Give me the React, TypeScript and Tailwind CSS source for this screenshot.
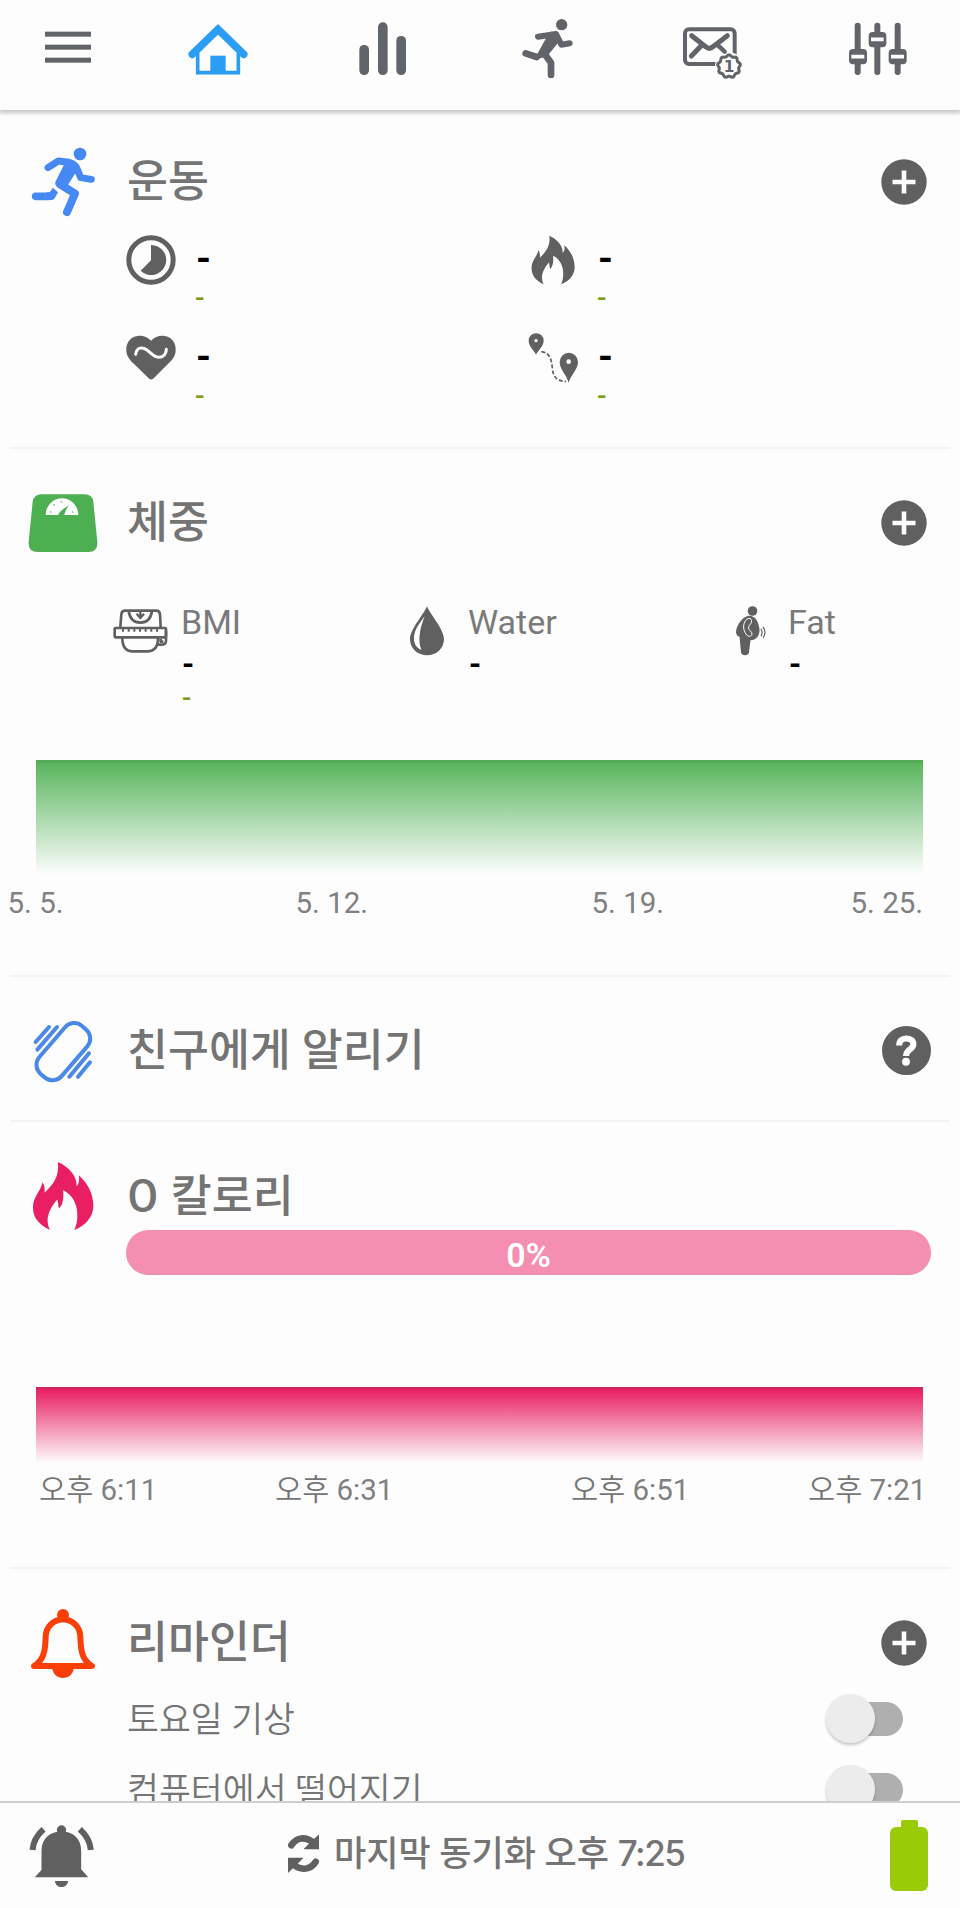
import { ReactNode } from "react";

interface IconProps {
  className?: string;
}

interface MetricProps {
  icon: ReactNode;
}

interface SectionHeaderProps {
  icon: ReactNode;
  title: ReactNode;
  action?: ReactNode;
}

interface ReminderProps {
  label: string;
}

const GRAY = "#606060";
const NAV = "#616468";

/* ---------- navigation icons ---------- */

function MenuIcon() {
  return (
    <svg viewBox="114 54 180 180" className="size-15" fill={NAV}>
      <rect x="135" y="95" width="138" height="15" />
      <rect x="135" y="134" width="138" height="15" />
      <rect x="135" y="173" width="138" height="15" />
    </svg>
  );
}

function HomeIcon() {
  return (
    <svg viewBox="565 54 180 180" className="size-15" fill="none" stroke="#2a9df4">
      <path d="M594 158V218H716V158" strokeWidth="11" />
      <path d="M578 163L655 88L732 163" strokeWidth="23" strokeLinecap="round" strokeLinejoin="miter" />
      <rect x="632" y="167" width="46" height="55" fill="#2a9df4" stroke="none" />
    </svg>
  );
}

function BarsIcon() {
  return (
    <svg viewBox="1059 54 180 180" className="size-15" fill={NAV}>
      <rect x="1078" y="135" width="29" height="90" rx="14" />
      <rect x="1134" y="67" width="29" height="158" rx="14" />
      <rect x="1189" y="108" width="29" height="117" rx="14" />
    </svg>
  );
}

function NavRunnerIcon() {
  return (
    <svg viewBox="114 54 180 180" className="size-15" fill="none" stroke={NAV} strokeLinecap="round" strokeLinejoin="round">
      <circle cx="245" cy="74" r="17" fill={NAV} stroke="none" />
      <path d="M174 110L228 102L244 134L269 130" strokeWidth="18" />
      <path d="M212 100L232 103L236 118L198 165L172 172Z" fill={NAV} strokeWidth="10" />
      <path d="M137 160L170 171" strokeWidth="20" />
      <path d="M194 162L213 188V225" strokeWidth="20" />
    </svg>
  );
}

// wavy outline of the mail badge
const BADGE_PATH =
  Array.from({ length: 91 }, (_, i) => {
    const a = (i / 90) * Math.PI * 2;
    const r = 32 + 2.5 * Math.cos(9 * a);
    return `${i === 0 ? "M" : "L"}${(746 + r * Math.sin(a)).toFixed(1)} ${(199 - r * Math.cos(a)).toFixed(1)}`;
  }).join("") + "Z";

function MailIcon() {
  return (
    <svg viewBox="608 54 180 180" className="size-15 overflow-visible" fill="none" stroke={NAV} strokeLinecap="round" strokeLinejoin="round">
      <rect x="614" y="88" width="149" height="104" rx="12" strokeWidth="12" />
      <path d="M634 107L676 140Q687 150 698 140L741 107" strokeWidth="15" />
      <path d="M633 168L662 138" strokeWidth="15" />
      <circle cx="746" cy="199" r="42" fill="#fdfdfd" stroke="none" />
      <path d="M713 136L733 155" strokeWidth="13" />
      <path d={BADGE_PATH} strokeWidth="9" fill="#fdfdfd" />
      <text
        x="746"
        y="216"
        textAnchor="middle"
        fontSize="46"
        fontWeight="700"
        fill={NAV}
        stroke="none"
        fontFamily="'DejaVu Sans', sans-serif"
      >
        1
      </text>
    </svg>
  );
}

function SlidersIcon() {
  return (
    <svg viewBox="1104 54 180 180" className="size-15" fill={NAV}>
      <path d="M1133 77V216M1192 77V216M1253 77V216" stroke={NAV} strokeWidth="18" strokeLinecap="round" />
      <rect x="1107" y="147" width="54" height="46" rx="12" />
      <rect x="1166" y="96" width="53" height="46" rx="12" />
      <rect x="1226" y="147" width="54" height="46" rx="12" />
      <path d="M1114 170H1153M1173 118H1211M1233 170H1272" stroke="#fdfdfd" strokeWidth="11" />
    </svg>
  );
}

/* ---------- section icons ---------- */

function RunnerIcon() {
  return (
    <svg viewBox="81 438 216 216" className="size-18" fill="none" stroke="#4688f4" strokeLinecap="round" strokeLinejoin="round">
      <circle cx="240" cy="462" r="19" fill="#4688f4" stroke="none" />
      <path d="M144 503L175 483L207 487Q226 492 231 506L242 533L274 538" strokeWidth="21" />
      <path d="M202 492L224 508L196 552L174 548Z" fill="#4688f4" strokeWidth="16" />
      <path d="M179 552L225 581L201 636" strokeWidth="24" />
      <path d="M107 589H146" strokeWidth="23" />
      <path d="M140 577H148Q151 576 158 563L174 577L164 595Q161 600 155 600H140Z" fill="#4688f4" stroke="none" />
    </svg>
  );
}

function ScaleIcon() {
  return (
    <svg viewBox="81 80 216 216" className="size-18">
      <path
        d="M125 102H253Q278 102 280 125L292 245Q294 275 265 275H113Q84 275 86 245L98 125Q101 102 125 102Z"
        fill="#4caf50"
      />
      <path d="M137 164A49 50 0 0 1 235 164Z" fill="#fff" />
      <path d="M174 165Q177 152 208 135Q196 148 192 165Z" fill="#4caf50" />
      <g fill="#4caf50" opacity="0.6">
        <circle cx="152" cy="155" r="3" />
        <circle cx="162" cy="134" r="3" />
        <circle cx="184" cy="125" r="3" />
        <circle cx="218" cy="155" r="3" />
      </g>
    </svg>
  );
}

function VibrateIcon() {
  return (
    <svg viewBox="81 134 216 216" className="size-18" fill="none" stroke="#4a8ae6" strokeWidth="12" strokeLinecap="round">
      <rect x="146" y="149" width="88" height="190" rx="36" transform="rotate(40.8 190 244)" />
      <path d="M147 170L107 215M171 170L112 238M267 249L208 319M270 276L234 319" />
    </svg>
  );
}

function FlameIcon({ className }: IconProps) {
  return (
    <svg viewBox="83 572 211 211" className={className} fill="currentColor">
      <path d="M173 575C208 590 233 622 229 648C236 642 239 632 236 615C262 638 280 670 280 708C280 741 256 768 222 780C231 765 234 742 230 716C226 692 211 670 189 660C191 682 189 703 177 715C173 708 175 696 171 688C156 706 143 727 142 750C142 762 145 772 149 780C119 765 98 745 98 712C98 680 120 666 127 636C133 645 134 656 133 668C160 641 178 618 173 575Z" />
    </svg>
  );
}

function BellIcon() {
  return (
    <svg viewBox="81 80 216 216" className="size-18" fill="none" stroke="#fb3f07" strokeWidth="18" strokeLinejoin="round">
      <path d="M102 257C130 240 136 215 137 170C138 138 160 119 189 117C218 119 240 138 241 170C242 215 248 240 276 257Z" />
      <circle cx="189" cy="104" r="18" fill="#fb3f07" stroke="none" />
      <path d="M156 260H222C220 282 206 293 189 293C172 293 158 282 156 260Z" fill="#fb3f07" stroke="none" />
    </svg>
  );
}

/* ---------- metric icons ---------- */

function TimerIcon() {
  return (
    <svg viewBox="78 61 150 150" className="size-[50px]">
      <circle cx="153" cy="136" r="66.5" fill="none" stroke={GRAY} strokeWidth="15" />
      <path d="M153 91A45 45 0 1 1 122 168L153 137Z" fill={GRAY} />
    </svg>
  );
}

function HeartIcon() {
  return (
    <svg viewBox="78 355 150 150" className="size-[50px]">
      <path
        d="M153 378C168 362 190 360 206 368C222 376 228 392 227 408C226 424 217 435 206 446L161 491Q153 498 146 491L100 446C88 434 80 424 79 408C78 392 84 376 100 368C117 360 138 362 153 378Z"
        fill={GRAY}
      />
      <path d="M107 419C110 398 126 395 141 406C158 421 170 434 188 425Q198 419 199 404" fill="none" stroke="#fdfdfd" strokeWidth="9" strokeLinecap="round" />
    </svg>
  );
}

function RouteIcon() {
  return (
    <svg viewBox="1284 355 150 150" className="size-[50px]" fill={GRAY}>
      <path d="M1308 420C1302 406 1286 395 1286 378A22.500 22.500 0 0 1 1331 378C1331 395 1314 406 1308 420Z" />
      <path d="M1406 504C1400 482 1379 464 1379 442A27.500 27.500 0 0 1 1434 442C1434 464 1412 482 1406 504Z" />
      <circle cx="1308" cy="378" r="5" fill="#fdfdfd" />
      <circle cx="1406" cy="441" r="7" fill="#fdfdfd" />
      <path d="M1324 411C1352 415 1354 436 1357 460C1359 488 1372 500 1398 500" fill="none" stroke={GRAY} strokeWidth="5" strokeDasharray="12 6" />
    </svg>
  );
}

function BmiIcon() {
  return (
    <svg viewBox="330 437 180 150" className="h-[50px] w-15" fill="none" stroke={GRAY} strokeWidth="8" strokeLinejoin="round">
      <path d="M361 500L364 462Q365 451 376 451H468Q479 451 480 462L482 500" />
      <path d="M386 452Q391 487 421 487Q451 487 456 452" />
      <path d="M410 460L421 473L432 460M421 452V473" strokeWidth="7" />
      <rect x="344" y="503" width="154" height="28" rx="3" />
      <path d="M369 503V514M386 503V514M403 503V514M420 503V514M437 503V514M454 503V514M471 503V514" strokeWidth="6" />
      <path d="M367 533Q367 573 398 573H442Q474 573 474 533" />
      <path d="M474 553H484Q498 553 498 541V512M482 535V544H490" />
    </svg>
  );
}

function DropIcon() {
  return (
    <svg viewBox="1191 437 180 150" className="h-[50px] w-15">
      <path d="M1281 438C1292 464 1332 508 1332 537A51 48 0 0 1 1230 537C1230 508 1270 464 1281 438Z" fill={GRAY} />
      <path d="M1274 468C1250 499 1242 515 1242 535C1242 553 1252 564 1264 568C1254 545 1257 510 1274 468Z" fill="#fdfdfd" />
    </svg>
  );
}

function BodyFatIcon() {
  return (
    <svg viewBox="717 605.700 60 50" className="h-[50px] w-15" fill={GRAY}>
      <circle cx="752.500" cy="610.700" r="4.800" />
      <path d="M748 615.500C742 617 736 626 736 632Q736.500 636 739.500 636.500L741 652Q741.500 655 745 655Q748.500 655 749 652L750.500 640C757 640 760 634 759.500 629C758.500 622 756 615 748 615.500Z" />
      <path d="M749 618C744 619 742 627 745 632C747 637 751 637 752 634C752.500 631 748 630 748.500 627C749 624 752 624 751.500 620Q751 618 749 618Z" fill="none" stroke="#fdfdfd" strokeWidth="1" />
      <path d="M761 628.500Q763 632 761 636M763 626.500Q767 632 763 637.500" fill="none" stroke={GRAY} strokeWidth="1.200" />
    </svg>
  );
}

/* ---------- buttons ---------- */

function PlusButton() {
  return (
    <button className="mt-[3px] mr-[33px]">
      <svg viewBox="0 0 46 46" className="size-[46px]">
        <circle cx="23" cy="23" r="22.700" fill={GRAY} />
        <path d="M23 11.500V34.500M11.500 23H34.500" stroke="#fff" strokeWidth="4.600" />
      </svg>
    </button>
  );
}

function HelpButton() {
  return (
    <button className="mt-[3px] mr-[29px] flex size-[49px] items-center justify-center rounded-full bg-[#606060]">
      <svg viewBox="0 0 50 50" className="size-[49px]" fill="none" stroke="#fff">
        <path d="M17.500 20C17.500 15 20.500 12.800 24.500 12.800C29 12.800 32 15 32 18.500C32 24 24.500 24 24.500 30.500" strokeWidth="6.200" />
        <circle cx="24.500" cy="36.500" r="4" fill="#fff" stroke="none" />
      </svg>
    </button>
  );
}

/* ---------- building blocks ---------- */

function SectionHeader({ icon, title, action }: SectionHeaderProps) {
  return (
    <div className="flex h-[108px] shrink-0 items-center pt-9">
      <div className="mt-1 flex w-[126px] justify-center">{icon}</div>
      <h2 className="mt-[5px] flex-1 pl-[1px] text-[44.500px] leading-none font-medium whitespace-nowrap text-[#747474]">{title}</h2>
      {action}
    </div>
  );
}

function Divider() {
  return <div className="mx-[10px] h-[2px] shrink-0 bg-[#f3f3f3]" />;
}

function Metric({ icon }: MetricProps) {
  return (
    <div className="flex h-[98px]">
      {icon}
      <div className="ml-[19px] flex flex-col">
        <span className="h-[48px] pl-[1px] text-[38px] leading-[48px] font-bold text-black">-</span>
        <span className="h-[30px] text-[28px] leading-[30px] font-medium text-[#7d9b1e]">-</span>
      </div>
    </div>
  );
}

function Reminder({ label }: ReminderProps) {
  return (
    <div className="flex h-[71px] shrink-0 items-center justify-between pr-[57px] pl-[127px]">
      <span className="pt-[3px] text-[34.700px] leading-none font-[350] whitespace-nowrap text-[#757575]">{label}</span>
      <div className="flex h-[34px] w-[72px] items-center rounded-full bg-[#afafaf]">
        <div className="-ml-[5px] size-[49px] shrink-0 rounded-full bg-[#ececec] shadow-[0_2px_3px_rgba(0,0,0,0.22)]" />
      </div>
    </div>
  );
}

function Header() {
  return (
    <header className="z-10 flex h-[110px] shrink-0 pt-[18px] shadow-[0_2px_4px_1px_rgba(0,0,0,0.22)]">
      <div className="flex w-[136px] justify-center">
        <MenuIcon />
      </div>
      {[HomeIcon, BarsIcon, NavRunnerIcon, MailIcon, SlidersIcon].map((Icon, i) => (
        <div key={i} className="flex flex-1 justify-center">
          <Icon />
        </div>
      ))}
    </header>
  );
}

function Footer() {
  return (
    <footer className="z-10 flex h-[107px] shrink-0 items-center border-t-2 border-[#cdcdcd] bg-[#fdfdfd]">
      <svg viewBox="84 734 200 192" className="ml-[28px] h-[64px] w-[67px]" fill={GRAY}>
        <path d="M104 894L124 872V815C124 776 150 758 184 756C218 758 243 776 243 815V870L264 894Z" />
        <circle cx="184" cy="752" r="14" />
        <path d="M164 905H204C202 917 194 923 184 923C174 923 166 917 164 905Z" />
        <path d="M97 812Q100 777 130 750M272 812Q269 777 239 750" fill="none" stroke={GRAY} strokeWidth="18" />
      </svg>
      <div className="flex flex-1 items-center pl-[193px] text-[35px] leading-none font-medium whitespace-nowrap text-[#747474]">
        <svg viewBox="864 762 94 118" className="mr-[15px] -mt-[4px] h-[39px] w-[31px]" fill={GRAY}>
          <path d="M958 763V808H911L928 791Z" />
          <path d="M874 796Q888 776 908 775Q928 775 942 790" fill="none" stroke={GRAY} strokeWidth="20" strokeLinecap="round" />
          <path d="M864 880V834H911L894 851Z" />
          <path d="M948 846Q936 866 914 867Q894 868 880 853" fill="none" stroke={GRAY} strokeWidth="20" strokeLinecap="round" />
        </svg>
        <span className="-mt-[3px]">
          마지막 동기화 오후 <span className="font-[Inter] tracking-[-1.500px]">7:25</span>
        </span>
      </div>
      <div className="mr-[32px] flex flex-col items-center">
        <div className="h-[7px] w-[17px] rounded-t-[2px] bg-[#99cc06]" />
        <div className="h-[64px] w-[38px] rounded-[6px] bg-[#99cc06]" />
      </div>
    </footer>
  );
}

export default function App() {
  return (
    <div className="flex h-[1908px] w-[960px] flex-col overflow-hidden bg-[#fdfdfd] font-[Roboto,'Noto_Sans_CJK_KR',sans-serif]">
      <Header />

      <main className="flex min-h-0 flex-1 flex-col overflow-hidden">
        <section className="-mt-[2px] h-[339px] shrink-0">
          <SectionHeader icon={<RunnerIcon />} title="운동" action={<PlusButton />} />
          <div className="grid grid-cols-[402px_1fr] pt-[19px] pl-[126px]">
            <Metric icon={<TimerIcon />} />
            <Metric icon={<FlameIcon className="size-[50px] text-[#606060]" />} />
            <Metric icon={<HeartIcon />} />
            <Metric icon={<RouteIcon />} />
          </div>
        </section>
        <Divider />

        <section className="h-[526px] shrink-0">
          <SectionHeader icon={<ScaleIcon />} title="체중" action={<PlusButton />} />
          <div className="grid h-[155px] grid-cols-[287px_320px_1fr] pt-[48px] pl-[110px]">
            {[
              { label: "BMI", icon: <BmiIcon />, status: true },
              { label: "Water", icon: <DropIcon />, status: false },
              { label: "Fat", icon: <BodyFatIcon />, status: false },
            ].map((item) => (
              <div key={item.label} className="flex">
                <div className="pt-[1px]">{item.icon}</div>
                <div className="ml-[11px] flex flex-col">
                  <span className="h-[34px] text-[34px] leading-[34px] text-[#7a7a7a]">{item.label}</span>
                  <span className="mt-[8px] h-[36px] pl-[1px] text-[31px] leading-[36px] font-bold text-black">-</span>
                  {item.status && (
                    <span className="h-[30px] pl-[1px] text-[27px] leading-[30px] font-medium text-[#7d9b1e]">-</span>
                  )}
                </div>
              </div>
            ))}
          </div>
          <div className="mt-[48px] mr-[37px] ml-[36px] h-[115px] border-t-[3px] border-[#52ab57] bg-linear-to-b/srgb from-[#59b65d] to-[#fdfdfd]" />
          <div className="mt-[10px] grid grid-cols-[288px_296px_259px_auto] pl-[7.500px] text-[29.500px] leading-[36px] text-[#808080]">
            <span>5. 5.</span>
            <span>5. 12.</span>
            <span>5. 19.</span>
            <span>5. 25.</span>
          </div>
        </section>
        <Divider />

        <section className="h-[143px] shrink-0">
          <SectionHeader icon={<VibrateIcon />} title="친구에게 알리기" action={<HelpButton />} />
        </section>
        <Divider />

        <section className="h-[445px] shrink-0">
          <SectionHeader
            icon={<FlameIcon className="size-[70px] text-[#e91e63]" />}
            title={
              <>
                <span className="inline-block origin-left scale-x-110 pr-[4px] font-[Inter]">0</span> 칼로리
              </>
            }
          />
          <div className="mr-[29px] ml-[126px] flex h-[45px] items-center justify-center rounded-full border-b border-[#dc8fae] bg-[#f48fb1] pt-[6px] text-[34px] leading-none font-semibold text-white">
            0%
          </div>
          <div className="mt-[112px] mr-[37px] ml-[36px] h-[76px] border-t-2 border-[#cf2462] bg-linear-to-b/srgb from-[#e91e63] to-[#fdfdfd]" />
          <div className="mt-[9px] grid grid-cols-[236px_296px_237px_auto] pl-[39px] text-[29.500px] leading-[36px] font-[350] whitespace-nowrap text-[#757575]">
            {["6:11", "6:31", "6:51", "7:21"].map((time) => (
              <span key={time}>
                오후 <span className="font-normal text-[#808080]">{time}</span>
              </span>
            ))}
          </div>
        </section>
        <Divider />

        <section className="shrink-0">
          <SectionHeader icon={<BellIcon />} title="리마인더" action={<PlusButton />} />
          <div className="pt-[6px]">
            <Reminder label="토요일 기상" />
            <Reminder label="컴퓨터에서 떨어지기" />
          </div>
        </section>
      </main>

      <Footer />
    </div>
  );
}
